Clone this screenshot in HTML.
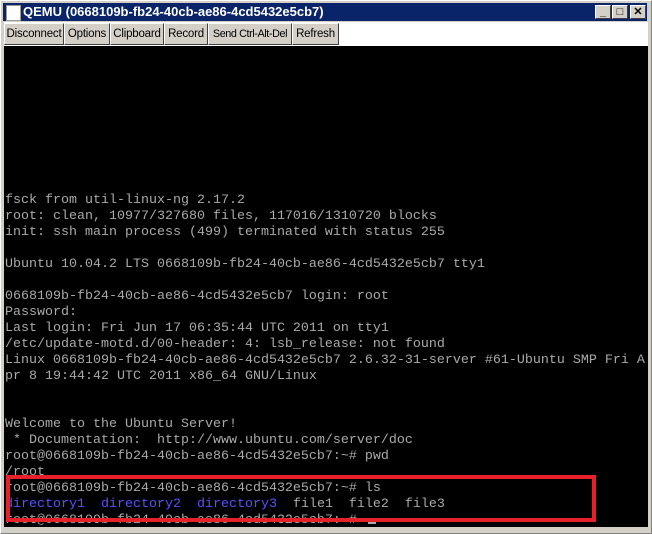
<!DOCTYPE html><html><head><style>
body{margin:0;width:652px;height:534px;background:#d4d0c8;position:relative;overflow:hidden;font-family:"Liberation Sans",sans-serif}
#frame{position:absolute;left:0;top:0;width:650px;height:532px;border:1px solid #808080;border-left-color:#fff;border-top-color:#fff;background:#d4d0c8}
#title{position:absolute;left:3px;top:3px;width:644px;height:18px;background:#0a246a;color:#fff;font-weight:bold;font-size:13px;line-height:18px}
#title span{position:absolute;left:20px;top:0}
.ico{position:absolute;left:3px;top:2px;width:13px;height:14px;background:#fff;border:1px solid #999}
.wb{position:absolute;top:2px;width:14px;height:12px;background:#d4d0c8;border:1px solid;border-color:#fff #404040 #404040 #fff;color:#000;font-size:11px;line-height:12px;text-align:center}
#tb{position:absolute;left:4px;top:22px;width:644px;height:24px;background:#fff}
.b{position:absolute;top:1px;background:#d4d0c8;border:1px solid;border-color:#fff #404040 #404040 #fff;font-size:11.5px;line-height:20px;text-align:center;color:#000;box-sizing:border-box;height:22px;white-space:nowrap;overflow:hidden;letter-spacing:-0.2px}
#term{position:absolute;left:4px;top:46px;width:644px;height:481px;background:#000;overflow:hidden}
pre{margin:0;position:absolute;left:1px;top:3px;font-family:"Liberation Mono",monospace;font-size:13.33px;line-height:16px;color:#aaa}
.d{color:#5555ff}
#red{position:absolute;left:6px;top:475px;width:582px;height:39px;border:4px solid #e8202a}
#cur{position:absolute;left:368px;top:521px;width:8px;height:3px;background:#aaa}
</style></head><body>
<div id="frame"></div>
<div id="title"><div class="ico"></div><span>QEMU (0668109b-fb24-40cb-ae86-4cd5432e5cb7)</span>
<div class="wb" style="left:592px">_</div><div class="wb" style="left:609px">□</div><div class="wb" style="left:627px">✕</div></div>
<div id="tb">
<div class="b" style="left:0;width:60px">Disconnect</div>
<div class="b" style="left:60px;width:46px">Options</div>
<div class="b" style="left:106px;width:54px">Clipboard</div>
<div class="b" style="left:160px;width:44px">Record</div>
<div class="b" style="left:204px;width:84px;font-size:10.8px;letter-spacing:-0.4px">Send Ctrl-Alt-Del</div>
<div class="b" style="left:288px;width:47px">Refresh</div>
</div>
<div id="term"><pre>









fsck from util-linux-ng 2.17.2
root: clean, 10977/327680 files, 117016/1310720 blocks
init: ssh main process (499) terminated with status 255

Ubuntu 10.04.2 LTS 0668109b-fb24-40cb-ae86-4cd5432e5cb7 tty1

0668109b-fb24-40cb-ae86-4cd5432e5cb7 login: root
Password:
Last login: Fri Jun 17 06:35:44 UTC 2011 on tty1
/etc/update-motd.d/00-header: 4: lsb_release: not found
Linux 0668109b-fb24-40cb-ae86-4cd5432e5cb7 2.6.32-31-server #61-Ubuntu SMP Fri A
pr 8 19:44:42 UTC 2011 x86_64 GNU/Linux


Welcome to the Ubuntu Server!
 * Documentation:  http://www.ubuntu.com/server/doc
root@0668109b-fb24-40cb-ae86-4cd5432e5cb7:~# pwd
/root
root@0668109b-fb24-40cb-ae86-4cd5432e5cb7:~# ls
<span class="d">directory1</span>  <span class="d">directory2</span>  <span class="d">directory3</span>  file1  file2  file3
root@0668109b-fb24-40cb-ae86-4cd5432e5cb7:~# </pre></div>
<div id="cur"></div>
<div id="red"></div>
</body></html>
